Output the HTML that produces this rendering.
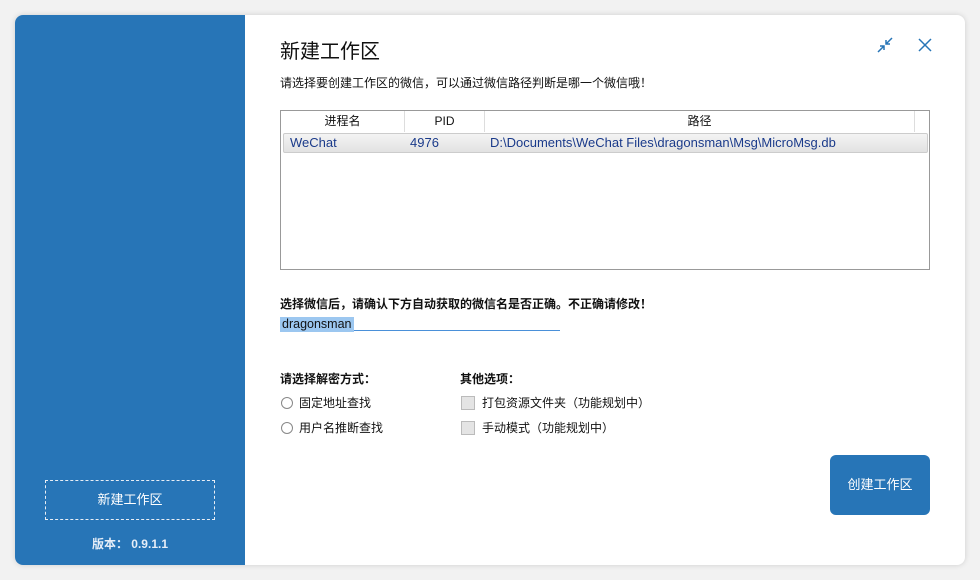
<!DOCTYPE html>
<html><head><meta charset="utf-8"><style>
*{margin:0;padding:0;box-sizing:border-box}
body{width:980px;height:580px;background:#f2f2f2;font-family:"Liberation Sans","Noto Sans CJK SC",sans-serif;position:relative;overflow:hidden;color:#111}
.win{position:absolute;left:15px;top:15px;width:950px;height:550px;background:#fff;border-radius:8px;box-shadow:0 0 6px rgba(0,0,0,.15);overflow:hidden}
.side{position:absolute;left:0;top:0;width:230px;height:550px;background:#2775b7}
.btn1{position:absolute;left:30px;top:465px;width:170px;height:40px;border:1.5px dashed #e8eef6;color:#fff;font-size:13px;text-align:center;line-height:38px}
.ver{position:absolute;left:0;width:230px;top:520px;text-align:center;color:#e6eef8;font-size:12px;font-weight:bold}
.t{position:absolute;white-space:nowrap}
.tbl{position:absolute;left:265px;top:95px;width:650px;height:160px;border:1px solid #999}
.hd{position:absolute;top:0;height:21px;font-size:12px;text-align:center;line-height:21px;border-right:1px solid #ddd}
.row{position:absolute;left:2px;top:22px;width:645px;height:20px;background:linear-gradient(#f4f4f4,#e2e2e2);border:1px solid #ccc;border-radius:2px;font-size:13px;color:#1a3a8a;line-height:18px}
.radio{display:inline-block;width:12px;height:12px;border:1px solid #888;border-radius:50%;vertical-align:-2px;margin-right:6px}
.cb{display:inline-block;width:14px;height:14px;border:1px solid #bbb;background:#e4e4e4;vertical-align:-3px;margin-right:7px}
.go{position:absolute;left:815px;top:440px;width:100px;height:60px;background:#2775b7;border-radius:6px;color:#fff;font-size:13px;text-align:center;line-height:60px}
</style></head><body>
<div class="win">
<div class="side">
<div class="btn1">新建工作区</div>
<div class="ver">版本：&nbsp;0.9.1.1</div>
</div>
<div class="t" style="left:265px;top:20px;font-size:20px">新建工作区</div>
<div class="t" style="left:265px;top:59px;font-size:12px">请选择要创建工作区的微信，可以通过微信路径判断是哪一个微信哦！</div>
<svg style="position:absolute;left:861px;top:21px" width="18" height="18" viewBox="0 0 18 18" fill="none" stroke="#2775b7" stroke-width="1.5"><path d="M16 2L10 8M10 4V8H14M2 16L8 10M4 10H8V14"/></svg>
<svg style="position:absolute;left:902px;top:22px" width="16" height="16" viewBox="0 0 16 16" stroke="#2775b7" stroke-width="1.5"><path d="M2 2L14 14M14 2L2 14"/></svg>
<div class="tbl">
<div class="hd" style="left:0;width:124px">进程名</div>
<div class="hd" style="left:124px;width:80px">PID</div>
<div class="hd" style="left:204px;width:430px">路径</div>
<div class="row"><span class="t" style="left:6px">WeChat</span><span class="t" style="left:126px">4976</span><span class="t" style="left:206px">D:\Documents\WeChat Files\dragonsman\Msg\MicroMsg.db</span></div>
</div>
<div class="t" style="left:265px;top:280px;font-size:12px;font-weight:bold">选择微信后，请确认下方自动获取的微信名是否正确。不正确请修改！</div>
<div style="position:absolute;left:265px;top:300px;width:280px;height:16px;border-bottom:1px solid #4a90d9"><span style="background:#9cc7f0;font-size:12.5px;padding:0 2px;line-height:15px;display:inline-block">dragonsman</span></div>
<div class="t" style="left:265px;top:355px;font-size:12px;font-weight:bold">请选择解密方式：</div>
<div class="t" style="left:266px;top:379px;font-size:12px"><span class="radio"></span>固定地址查找</div>
<div class="t" style="left:266px;top:404px;font-size:12px"><span class="radio"></span>用户名推断查找</div>
<div class="t" style="left:445px;top:355px;font-size:12px;font-weight:bold">其他选项：</div>
<div class="t" style="left:446px;top:379px;font-size:12px"><span class="cb"></span>打包资源文件夹（功能规划中）</div>
<div class="t" style="left:446px;top:404px;font-size:12px"><span class="cb"></span>手动模式（功能规划中）</div>
<div class="go">创建工作区</div>
</div>
</body></html>
